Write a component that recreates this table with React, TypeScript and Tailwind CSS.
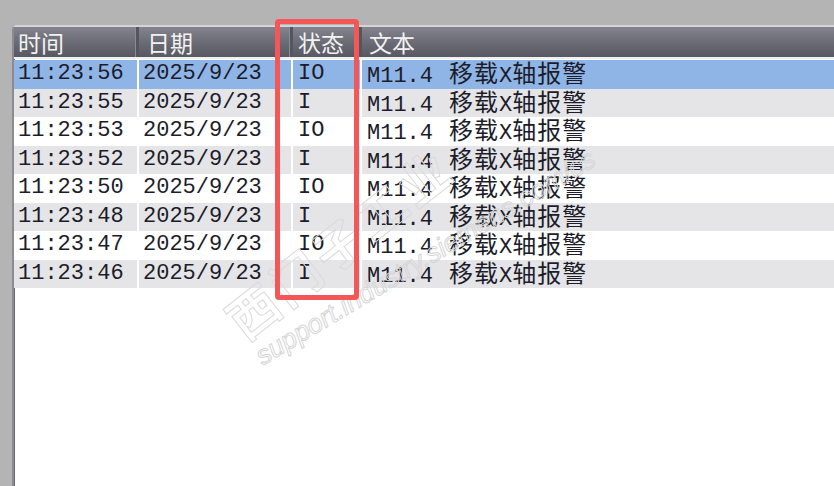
import React from 'react';

type Row = { time: string; date: string; state: string };

const rows: Row[] = [
    { time: '11:23:56', date: '2025/9/23', state: 'IO' },
    { time: '11:23:55', date: '2025/9/23', state: 'I' },
    { time: '11:23:53', date: '2025/9/23', state: 'IO' },
    { time: '11:23:52', date: '2025/9/23', state: 'I' },
    { time: '11:23:50', date: '2025/9/23', state: 'IO' },
    { time: '11:23:48', date: '2025/9/23', state: 'I' },
    { time: '11:23:47', date: '2025/9/23', state: 'IO' },
    { time: '11:23:46', date: '2025/9/23', state: 'I' },
];

const mono = "font-['Liberation_Mono','Noto_Sans_CJK_SC',monospace]";
const cjk = "font-['Noto_Sans_CJK_SC',sans-serif]";

function HeaderCell({ label, className }: { label: string; className: string }) {
    return (
        <div className={`flex items-center h-full border-r-[3px] border-r-[#55555e] shadow-[inset_-1px_0_0_#8a8a94] ${className}`}>
            <span className={`${cjk} text-[23px] leading-none text-[#f2f2f2]`}>{label}</span>
        </div>
    );
}

export default function App() {
    return (
        <div className="relative w-[834px] h-[486px] overflow-hidden bg-[#b4b4b4] pt-[25px] pl-[12px]">
            {/* list frame */}
            <div className="h-full bg-white rounded-tl-[5px] border-t-2 border-l-2 border-t-[#d4d4d8] border-l-[#8c8c90] shadow-[inset_1px_1px_0_#6a6a70]">
                {/* header */}
                <div className="flex h-[32px] bg-gradient-to-b from-[#84848e] via-[#6c6c76] to-[#585862] border-b-2 border-b-[#eef0f4]">
                    <HeaderCell label="时间" className="w-[125px] pl-[4px]" />
                    <HeaderCell label="日期" className="w-[154px] pl-[8px]" />
                    <HeaderCell label="状态" className="w-[69px] pl-[5px]" />
                    <div className="flex items-center h-full pl-[7px]">
                        <span className={`${cjk} text-[23px] leading-none text-[#f2f2f2]`}>文本</span>
                    </div>
                </div>

                {/* rows */}
                <div className="pt-[1px]">
                    {rows.map((r, i) => {
                        const bg = i === 0 ? 'bg-[#8fb4e6]' : i % 2 === 1 ? 'bg-[#e5e5e8]' : 'bg-white';
                        return (
                            <div key={i} className="flex h-[28.5px] text-[#1c1c2a]">
                                <div className={`${bg} w-[123px] mr-[2px] pl-[4px] flex items-center ${mono} text-[22px] leading-none`}>{r.time}</div>
                                <div className={`${bg} w-[152px] mr-[2px] pl-[4px] flex items-center ${mono} text-[22px] leading-none`}>{r.date}</div>
                                <div className={`${bg} w-[67px] mr-[2px] pl-[5px] flex items-center ${mono} text-[22px] leading-none`}>{r.state}</div>
                                <div className={`${bg} flex-1 pl-[5px] flex items-center whitespace-nowrap`}>
                                    <span className="leading-none">
                                        <span className={`${mono} text-[22px] mr-[16px]`}>M11.4</span>
                                        <span className={`${cjk} text-[24px] tracking-[1px]`}>移载</span>
                                        <span className={`${mono} text-[22px]`}>X</span>
                                        <span className={`${cjk} text-[24px] tracking-[1px]`}>轴报警</span>
                                    </span>
                                </div>
                            </div>
                        );
                    })}
                </div>
            </div>

            {/* watermark */}
            <div className="pointer-events-none absolute left-[232px] top-[300px] -rotate-[38deg] origin-left">
                <div className={`${cjk} text-[50px] leading-none font-bold text-transparent [-webkit-text-stroke:1px_#dadada] tracking-[4px]`}>西门子工业</div>
            </div>
            <div className="pointer-events-none absolute left-[258px] top-[345px] -rotate-[31deg] origin-left">
                <div className="font-['Liberation_Sans',sans-serif] text-[27px] leading-none italic text-transparent [-webkit-text-stroke:1px_#d6d6d6]">support.industry.siemens.com/cs</div>
            </div>

            {/* red highlight */}
            <div className="pointer-events-none absolute left-[275px] top-[19px] w-[84px] h-[281px] border-[5px] border-[#f45757] rounded-[4px]" />
        </div>
    );
}
